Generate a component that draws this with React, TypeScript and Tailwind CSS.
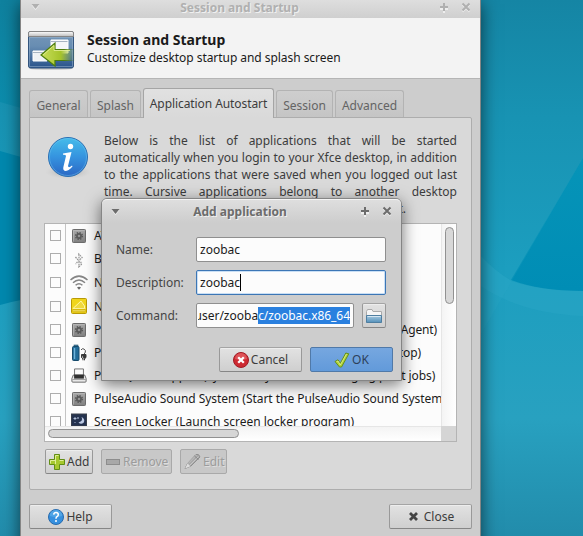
import type { ReactNode } from "react";

const BTN =
  "box-border flex h-[25px] items-center rounded-[2px] border border-[#999] border-t-[#a4a4a4] border-b-[#868686] bg-linear-to-b from-[#e2e2e2] to-[#cfcfcf] whitespace-nowrap text-[#3c3c3c] shadow-[inset_0_1px_0_#ededed]";
const BTN_OFF =
  "box-border flex h-[25px] items-center rounded-[2px] border border-[#a9a9a9] bg-[#c8c8c8] whitespace-nowrap text-[#9c9c9c] [text-shadow:1px_1px_0_#dedede]";

function Wallpaper() {
  return (
    <svg className="absolute inset-0" width="583" height="536" viewBox="0 0 583 536">
      <defs>
        <linearGradient id="sea" x1="0" y1="0" x2="0" y2="1">
          <stop offset="0" stopColor="#1585a4" />
          <stop offset="0.22" stopColor="#1893b3" />
          <stop offset="0.5" stopColor="#1c9ebf" />
          <stop offset="0.78" stopColor="#28a1c0" />
          <stop offset="1" stopColor="#228cab" />
        </linearGradient>
        <linearGradient id="deep" x1="0" y1="0" x2="0" y2="1">
          <stop offset="0" stopColor="#0694b8" />
          <stop offset="1" stopColor="#008db5" />
        </linearGradient>
        <linearGradient id="port" x1="0" y1="0" x2="0" y2="1">
          <stop offset="0" stopColor="#0f819e" />
          <stop offset="1" stopColor="#0c8cac" />
        </linearGradient>
      </defs>
      <rect width="583" height="536" fill="url(#sea)" />
      <path d="M0 0H21V108Q10 105 0 102Z" fill="url(#port)" />
      <path d="M0 151L21 157V300Q10 302 0 305Z" fill="#0088ae" />
      <path d="M583 158L511 280Q540 291 583 291Z" fill="url(#deep)" />
      <path d="M481 256Q494 270 511 281Q540 291 583 291V316Q520 313 481 286Z" fill="#2fa8c8" opacity="0.35" />
      <path d="M583 158L481 334V256Q495 272 511 280Z" fill="#38acca" opacity="0.15" />
    </svg>
  );
}

function GearIcon() {
  return (
    <svg width="14" height="14" viewBox="0 0 14 14">
      <defs>
        <linearGradient id="gear" x1="0" y1="0" x2="0" y2="1">
          <stop stopColor="#a9a9a9" />
          <stop offset="1" stopColor="#808080" />
        </linearGradient>
      </defs>
      <rect x=".5" y=".5" width="13" height="13" rx=".8" fill="url(#gear)" stroke="#6c6c6c" />
      <path d="M1.5 12.5V1.5H12.5" fill="none" stroke="#c0c0c0" strokeWidth=".6" />
      <circle cx="7" cy="7" r="3.4" fill="none" stroke="#585858" strokeWidth="1.4" strokeDasharray="1.4 1.27" />
      <circle cx="7" cy="7" r="2.1" fill="none" stroke="#585858" strokeWidth="1.6" />
    </svg>
  );
}

function BluetoothIcon() {
  return (
    <svg width="16" height="18" viewBox="0 0 16 18">
      <path d="M4.5 7L11 13.500L8 16.500V4.500L11 7.500L4.500 14" fill="none" stroke="#8a8a8a" strokeWidth="1.4" strokeDasharray="1.6 .8" />
      <path d="M5.500 7.500L11 13L8 16V5L11 7.500L5 13.500" fill="none" stroke="#eee" strokeWidth=".5" />
    </svg>
  );
}

function WifiIcon() {
  return (
    <svg width="18" height="16" viewBox="0 0 18 16">
      <g fill="none" stroke="#858585" strokeWidth="1.5">
        <path d="M.5 6Q9-1.800 17.500 6" />
        <path d="M3 8.800Q9 3.300 15 8.800" />
        <path d="M5.600 11.200Q9 8.200 12.400 11.200" />
      </g>
      <path d="M7 13.500Q9 12.200 11 13.500L9 15.700Z" fill="#6a6a6a" />
    </svg>
  );
}

function NoteIcon() {
  return (
    <svg width="16" height="16" viewBox="0 0 16 16">
      <rect x=".5" y=".5" width="15" height="15" rx="1" fill="#f0d51c" stroke="#b99a06" />
      <path d="M2 10.5L10 3L13.5 8V10.5Z" fill="#efd93e" stroke="#fff7a8" />
      <path d="M1.5 10.8H14.5V14.5H1.5Z" fill="#d9b90c" />
      <path d="M1.5 10.5H14.5M2 12.8H14" stroke="#fbf2a0" strokeWidth=".7" />
    </svg>
  );
}

function BatteryIcon() {
  return (
    <svg width="16" height="18" viewBox="0 0 16 18">
      <rect x="3" y="1" width="4" height="3" fill="#487f9e" stroke="#24506b" strokeWidth=".6" />
      <rect x="1.500" y="2.500" width="6.500" height="14" rx="1" fill="#226c99" stroke="#174b6c" />
      <path d="M3.500 4V15" stroke="#70b4da" strokeWidth="1.4" />
      <path d="M10 6Q11 4 13 5Q15.500 6.500 14 9L13 10" fill="none" stroke="#555" />
      <path d="M10.500 10.500H15V13.500L13.500 14.800V16.300M12 16.300V14.800L10.500 13.500V10.500" fill="#383838" stroke="#383838" />
    </svg>
  );
}

function PrinterIcon() {
  return (
    <svg width="16" height="17" viewBox="0 0 18 18">
      <path d="M4 9V1.6H14V9" fill="#fafafa" stroke="#666" />
      <path d="M2.5 8.5H15.5L17 12.5V15.5Q17 16.5 16 16.5H2Q1 16.5 1 15.5V12.5Z" fill="#e8e8e8" stroke="#606060" />
      <path d="M3.5 8H14.5V12.500H3.5Z" fill="#303030" />
      <path d="M1.5 13.500H16.5" stroke="#999" />
    </svg>
  );
}

function LockerIcon() {
  return (
    <svg width="16" height="18" viewBox="0 0 16 18">
      <rect x=".5" y="1" width="15" height="12" fill="#24324f" stroke="#3a404c" />
      <path d="M10.5 4Q12.5 8 7.5 9.5Q10 12 12.8 9.5Q14.5 6 10.5 4Z" fill="#bcc9e3" />
      <path d="M4 4V7M2.5 5.5H5.5M7 4.3V5.7M6.3 5H7.7M4 9V10" stroke="#c8d4ee" strokeWidth=".8" />
      <path d="M5 14H11V16H5Z" fill="#444" />
    </svg>
  );
}

function SessionIcon() {
  return (
    <svg width="48" height="40" viewBox="0 0 48 40">
      <defs>
        <linearGradient id="scr" x1="0" y1="0" x2="0" y2="1">
          <stop stopColor="#7697b8" />
          <stop offset=".4" stopColor="#688db2" />
          <stop offset="1" stopColor="#28528a" />
        </linearGradient>
        <linearGradient id="bar" x1="0" y1="0" x2="0" y2="1">
          <stop stopColor="#fff" />
          <stop offset="1" stopColor="#bcbcbc" />
        </linearGradient>
        <linearGradient id="arw" x1="0" y1="0" x2="1" y2="0">
          <stop stopColor="#c9df5b" />
          <stop offset=".6" stopColor="#a5c32b" />
          <stop offset="1" stopColor="#a5c32b" stopOpacity="0" />
        </linearGradient>
        <linearGradient id="arwLine" x1="0" y1="0" x2="1" y2="0">
          <stop stopColor="#4c7d0c" />
          <stop offset=".7" stopColor="#4c7d0c" />
          <stop offset="1" stopColor="#4c7d0c" stopOpacity=".1" />
        </linearGradient>
      </defs>
      <ellipse cx="24" cy="38.6" rx="22" ry="1.2" fill="#aaa" opacity=".6" />
      <rect x="1.5" y="1.5" width="45" height="36.5" rx="2" fill="url(#scr)" stroke="#33557e" />
      <path d="M1.5 6.500V3Q1.5 1.5 3 1.5H45Q46.500 1.5 46.500 3V6.500Z" fill="url(#bar)" stroke="#858585" />
      <path d="M2.500 7.500H45.500V36.500H2.500Z" fill="none" stroke="#9eb7ce" strokeWidth=".5" />
      <path d="M24 10H41V23H24Z" fill="#f4f6f8" stroke="#fff" />
      <path d="M24 11.500H40.500" stroke="#a7b4c2" />
      <path d="M6 21H20V31H6Z" fill="#eef1f4" stroke="#fff" />
      <path d="M6 22.500H16" stroke="#a7b4c2" />
      <path d="M14 25L28 13V19.500H47V30.500H28V36Z" fill="url(#arw)" stroke="url(#arwLine)" strokeWidth="1.2" />
      <path d="M16 25L27 15.500V20.500H43" fill="none" stroke="#e5f09b" strokeWidth=".8" />
    </svg>
  );
}

function InfoIcon() {
  return (
    <svg width="46" height="46" viewBox="0 0 46 46">
      <defs>
        <linearGradient id="info" x1="0" y1="0" x2="0" y2="1">
          <stop stopColor="#46bdea" />
          <stop offset=".5" stopColor="#3593df" />
          <stop offset="1" stopColor="#2b67c4" />
        </linearGradient>
        <radialGradient id="infoShade">
          <stop stopColor="#777" />
          <stop offset="1" stopColor="#bbb" stopOpacity="0" />
        </radialGradient>
      </defs>
      <ellipse cx="23" cy="37" rx="23" ry="7" fill="url(#infoShade)" opacity=".6" />
      <circle cx="23" cy="22" r="19.500" fill="url(#info)" stroke="#2b70b4" />
      <circle cx="23" cy="22" r="18.500" fill="none" stroke="#77c8f2" strokeWidth=".7" opacity=".6" />
      <circle cx="25.500" cy="11.500" r="2.700" fill="#fff" />
      <path d="M18 18.500L26.500 17L23 31Q23.500 33.500 27 30.500L27.500 31.500Q23.500 36 20 36Q17.500 35 18.500 31.500L21 21Q21 19.500 18 19.700Z" fill="#fff" />
    </svg>
  );
}

function PlusIcon() {
  return (
    <svg width="16" height="16" viewBox="0 0 16 16">
      <path d="M5.500 .5H10.500V5.500H15.500V10.500H10.500V15.500H5.500V10.500H.5V5.500H5.500Z" fill="#a6c82f" stroke="#618d15" />
      <path d="M6.500 10V1.500H9.500M1.500 9.500V6.500H6.500M10.500 6.500H14.500" fill="none" stroke="#e0ee99" />
    </svg>
  );
}

function PencilIcon() {
  return (
    <svg width="17" height="17" viewBox="0 0 17 17">
      <path d="M1 15.500L3.500 10.500L12 1.500Q15 .5 16 4L7 13Z" fill="#a9a9a9" stroke="#8f8f8f" />
      <path d="M4 10.500L12.500 2M6 12L14.500 3.500" stroke="#c6c6c6" />
      <path d="M1 15.500L3.500 10.500L6.500 13.200Z" fill="#dedede" />
      <path d="M10.500 3L14.500 6.500" stroke="#888" />
    </svg>
  );
}

function HelpIcon() {
  return (
    <svg width="16" height="16" viewBox="0 0 16 16">
      <circle cx="8" cy="8" r="7.500" fill="#3690df" stroke="#286aac" />
      <path d="M1.800 7A6.200 6.200 0 0 1 14.200 7Q8 9 1.800 7Z" fill="#69b9ee" opacity=".5" />
      <path d="M5.700 5.600Q6 3.400 8.200 3.500Q10.400 3.700 10.300 5.700Q10.200 7 9 7.700Q8 8.400 8 9.700" fill="none" stroke="#fff" strokeWidth="1.500" />
      <circle cx="8" cy="12" r="1" fill="#fff" />
    </svg>
  );
}

function CancelIcon() {
  return (
    <svg width="16" height="16" viewBox="0 0 16 16">
      <circle cx="8" cy="8" r="7.500" fill="#cd2a32" stroke="#a01b25" />
      <path d="M2 7A6 6 0 0 1 14 7Q8 9 2 7Z" fill="#ec7479" opacity=".55" />
      <path d="M5.200 5.200L10.800 10.800M10.800 5.200L5.200 10.800" stroke="#fff" strokeWidth="2.300" />
    </svg>
  );
}

function OkIcon() {
  return (
    <svg width="16" height="16" viewBox="0 0 16 16">
      <path d="M1 9.500L4 7.800L6.300 11.300L11.800 1L14.800 1.800L7.500 15H5.500Z" fill="#b1d336" stroke="#64901a" />
      <path d="M2.500 9.700L4 9L6.300 13L12.500 2" fill="none" stroke="#e0ef91" strokeWidth=".8" />
    </svg>
  );
}

function FolderIcon() {
  return (
    <svg width="16" height="14" viewBox="0 0 16 14">
      <defs>
        <linearGradient id="fold" x1="0" y1="0" x2="0" y2="1">
          <stop stopColor="#a9cae0" />
          <stop offset="1" stopColor="#5390ba" />
        </linearGradient>
      </defs>
      <path d="M.5 13V2.500L1.500 .5H6L7 2.500H15.500V13Z" fill="#f5f5f5" stroke="#aaa" />
      <path d="M.5 6.500H15.500V13.500H.5Z" fill="url(#fold)" stroke="#4f7ea0" />
      <path d="M1.500 7.500H14.500" stroke="#d5e6f2" />
    </svg>
  );
}

function TitleButtons({ color, shine }: { color: string; shine: string }) {
  return (
    <svg width="32" height="11" viewBox="0 0 32 11">
      <g fill="none" strokeWidth="2">
        <path d="M5 2V10M1 6H9" stroke={shine} transform="translate(0 1)" />
        <path d="M5 1V9M1 5H9" stroke={color} />
        <path d="M23.500 2.500L30.500 9.500M30.500 2.500L23.500 9.500" stroke={shine} />
        <path d="M23.500 1.500L30.500 8.500M30.500 1.500L23.500 8.500" stroke={color} />
      </g>
    </svg>
  );
}

function MenuArrow({ color }: { color: string }) {
  return (
    <svg width="9" height="6" viewBox="0 0 9 6">
      <path d="M.5 1H8.500L4.500 6Z" fill="#f2f2f2" />
      <path d="M.5 0H8.500L4.500 5Z" fill={color} />
    </svg>
  );
}

const ROWS: { icon: ReactNode; label: string; h: string; fit?: string }[] = [
  { icon: <GearIcon />, label: "AT-SPI D-Bus Bus", h: "h-[23px]" },
  { icon: <BluetoothIcon />, label: "Blueman Applet (Bluetooth Manager)", h: "h-[23px]" },
  { icon: <WifiIcon />, label: "Network (Manage network connections)", h: "h-6" },
  { icon: <NoteIcon />, label: "Notes (Notes plugin)", h: "h-6" },
  {
    icon: <GearIcon />,
    label: "PolicyKit Authentication Agent (PolicyKit Authentication Agent)",
    h: "h-[23px]",
    fit: "w-[343px] [text-align-last:justify] tracking-[-0.15px]",
  },
  {
    icon: <BatteryIcon />,
    label: "Power Manager (Power management for the Xfce desktop)",
    h: "h-[23px]",
    fit: "w-[327px] [text-align-last:justify] tracking-[-0.1px]",
  },
  {
    icon: <PrinterIcon />,
    label: "Print Queue Applet (System tray icon for managing print jobs)",
    h: "h-[23px]",
    fit: "tracking-[-0.1px]",
  },
  {
    icon: <GearIcon />,
    label: "PulseAudio Sound System (Start the PulseAudio Sound System)",
    h: "h-[23px]",
    fit: "tracking-[-0.04px]",
  },
  { icon: <LockerIcon />, label: "Screen Locker (Launch screen locker program)", h: "h-[23px]" },
];
const TAB = "box-border flex h-[27px] items-center justify-center rounded-t-[3px] border border-b-0 border-[#b3b3b3] bg-linear-to-b from-[#cecece] to-[#c5c5c5] pt-[2px] text-[#646464]";

function AutostartList() {
  return (
    <div className="box-border flex h-[219px] w-[413px] flex-col border border-[#b4b4b4] bg-[#fcfcfc]">
      <div className="flex h-[202px]">
        <div className="w-[396px] overflow-hidden">
          {ROWS.map((r, i) => (
            <div key={i} className={`flex items-center ${r.h}`}>
              <div className="flex h-full w-[21px] shrink-0 items-center border-r border-[#c4c4c4] pl-[5px]">
                <div className="size-[11px] border border-[#adadad]" />
              </div>
              <div className="flex w-[28px] shrink-0 items-center justify-center pr-[2px]">{r.icon}</div>
              <div className={`whitespace-nowrap text-[#1c1c1c] ${r.fit ?? ""}`}>{r.label}</div>
            </div>
          ))}
        </div>
        <div className="flex w-[15px] justify-center border-l border-[#e6e6e6] bg-linear-to-r from-[#f4f4f4] to-white pt-[3px]">
          <div className="h-[77px] w-[9px] rounded-full border border-[#919191] bg-[#d8d8d8]" />
        </div>
      </div>
      <div className="flex h-[15px]">
        <div className="flex w-[396px] items-center border-t border-[#e6e6e6] bg-linear-to-b from-[#f4f4f4] to-white pl-[3px]">
          <div className="mb-[2px] h-[9px] w-[191px] rounded-full border border-[#919191] bg-[#d6d6d6]" />
        </div>
        <div className="w-[15px] bg-[#d5d5d5]" />
      </div>
    </div>
  );
}

function SessionWindow() {
  return (
    <div className="absolute top-0 left-[20px] box-border flex h-[550px] w-[461px] flex-col border-x border-[#858585] bg-[#cdcdcd] shadow-[0_4px_16px_rgba(0,0,0,0.6)]">
      <div className="flex h-[18px] items-center bg-linear-to-b from-[#dedede] to-[#cfcfcf] pr-[9px] pb-[4px] pl-[10px] text-[#b0b0b0]">
        <MenuArrow color="#b0b0b0" />
        <div className="flex-1 text-center font-bold [text-shadow:1px_1px_0_#f0f0f0]">Session and Startup</div>
        <TitleButtons color="#b0b0b0" shine="#eee" />
      </div>
      <div className="flex h-[61px] border-b border-[#b5b5b5] bg-[#f3f3f3] pt-[12px] pl-[6px] text-[#1a1a1a]">
        <SessionIcon />
        <div className="flex flex-col pl-[12px]">
          <div className="text-[14px] leading-[20px] font-bold">Session and Startup</div>
          <div className="leading-[16px] tracking-[-0.05px]">Customize desktop startup and splash screen</div>
        </div>
      </div>
      <div className="flex h-[38px] items-end gap-[2px] pl-[8px]">
        <div className={`${TAB} w-[59px]`}>General</div>
        <div className={`${TAB} w-[51px]`}>Splash</div>
        <div className="z-10 -mb-px box-border flex h-[30px] w-[131px] items-center justify-center rounded-t-[3px] border border-b-0 border-[#a5a5a5] bg-linear-to-b from-[#e1e1e1] to-[#d9d9d9] tracking-[-0.08px] text-[#3c3c3c]">
          Application Autostart
        </div>
        <div className={`${TAB} w-[57px]`}>Session</div>
        <div className={`${TAB} w-[69px]`}>Advanced</div>
      </div>
      <div className="ml-[8px] box-border flex h-[373px] w-[443px] flex-col rounded-[2px] rounded-tl-none border border-[#adadad] bg-[#d9d9d9] pl-[14px]">
        <div className="flex h-[105px] pt-[14px]">
          <div className="pt-[3px] pl-px">
            <InfoIcon />
          </div>
          <div className="ml-[13px] h-[85px] w-[353px] text-justify leading-[17px] text-[#3c3c3c]">
            <div className="[text-align-last:justify]">Below is the list of applications that will be started</div>
            <div className="[text-align-last:justify]">automatically when you login to your Xfce desktop, in addition</div>
            <div className="[text-align-last:justify]">to the applications that were saved when you logged out last</div>
            <div className="[text-align-last:justify]">time. Cursive applications belong to another desktop</div>
            <div className="w-[302px] whitespace-nowrap [text-align-last:justify]">environment, but you can enable them if you want.</div>
          </div>
        </div>
        <AutostartList />
        <div className="flex gap-[8px] pt-[7px] pl-px">
          <div className={`${BTN} w-[48px] gap-[2px] pl-[3px]`}><PlusIcon />Add</div>
          <div className={`${BTN_OFF} w-[71px] gap-[3px] pl-[4px]`}>
            <div className="h-[6px] w-[14px] border border-[#8d8d8d] bg-[#a8a8a8]" />
            Remove
          </div>
          <div className={`${BTN_OFF} w-[47px] gap-[2px] pl-[3px]`}><PencilIcon />Edit</div>
        </div>
      </div>
      <div className="flex justify-between px-[8px] pt-[14px]">
        <div className={`${BTN} w-[83px] justify-center gap-[2px]`}><HelpIcon />Help</div>
        <div className={`${BTN} w-[83px] justify-center gap-[6px] pl-[2px]`}>
          <svg width="9" height="9" viewBox="0 0 9 9"><path d="M1 1L8 8M8 1L1 8" stroke="#444" strokeWidth="2.800" /></svg>
          Close
        </div>
      </div>
    </div>
  );
}

const FIELD = "box-border flex h-[25px] items-center rounded-[2px] border bg-[#fcfcfc] text-[#1a1a1a]";

function AddDialog() {
  return (
    <div className="absolute top-[198px] left-[101px] box-border flex h-[183px] w-[301px] flex-col rounded-t-[6px] border border-[#858585] bg-[#cdcdcd] shadow-[0_4px_16px_rgba(0,0,0,0.55)]">
      <div className="flex h-[24px] items-center rounded-t-[5px] border-t border-[#f3f3f3] bg-linear-to-b from-[#dedede] to-[#cdcdcd] pr-[9px] pl-[9px] text-[#6c6c6c]">
        <MenuArrow color="#6c6c6c" />
        <div className="flex-1 text-center font-bold [text-shadow:1px_1px_0_#f0f0f0]">Add application</div>
        <TitleButtons color="#6c6c6c" shine="#eee" />
      </div>
      <div className="flex flex-col gap-[8px] pt-[14px] pl-[14px] text-[#454545]">
        <div className="flex items-center">
          <div className="w-[80px]">Name:</div>
          <div className={`${FIELD} w-[190px] border-[#8f8f8f] pl-[3px]`}>zoobac</div>
        </div>
        <div className="flex items-center">
          <div className="w-[80px]">Description:</div>
          <div className={`${FIELD} w-[190px] border-[#3c76b5] pl-[3px] shadow-[inset_0_0_0_1px_#c9dff5]`}>
            zoobac
            <div className="h-[17px] w-px bg-black" />
          </div>
        </div>
        <div className="flex items-center">
          <div className="w-[80px]">Command:</div>
          <div className={`${FIELD} w-[158px] border-[#8f8f8f] px-px`}>
            <div className="flex w-full justify-end overflow-hidden pr-[2px] whitespace-nowrap">
              <span>/home/user/zooba</span>
              <span className="bg-[#2a80df] tracking-[-0.05px] text-white">c/zoobac.x86_64</span>
            </div>
          </div>
          <div className={`${BTN} ml-[8px] w-[24px] justify-center`}><FolderIcon /></div>
        </div>
      </div>
      <div className="flex justify-end gap-[8px] pt-[19px] pr-[8px]">
        <div className={`${BTN} w-[83px] justify-center gap-[2px]`}><CancelIcon />Cancel</div>
        <div className="box-border flex h-[25px] w-[83px] items-center justify-center gap-[2px] rounded-[2px] border border-[#5079a8] bg-linear-to-b from-[#76a7e0] to-[#629ada] text-[#2d405a]"><OkIcon />OK</div>
      </div>
    </div>
  );
}

export default function App() {
  return (
    <div className="relative h-[536px] w-[583px] overflow-hidden font-['Noto_Sans',sans-serif] text-[12px] leading-[17px]">
      <Wallpaper />
      <SessionWindow />
      <AddDialog />
    </div>
  );
}
